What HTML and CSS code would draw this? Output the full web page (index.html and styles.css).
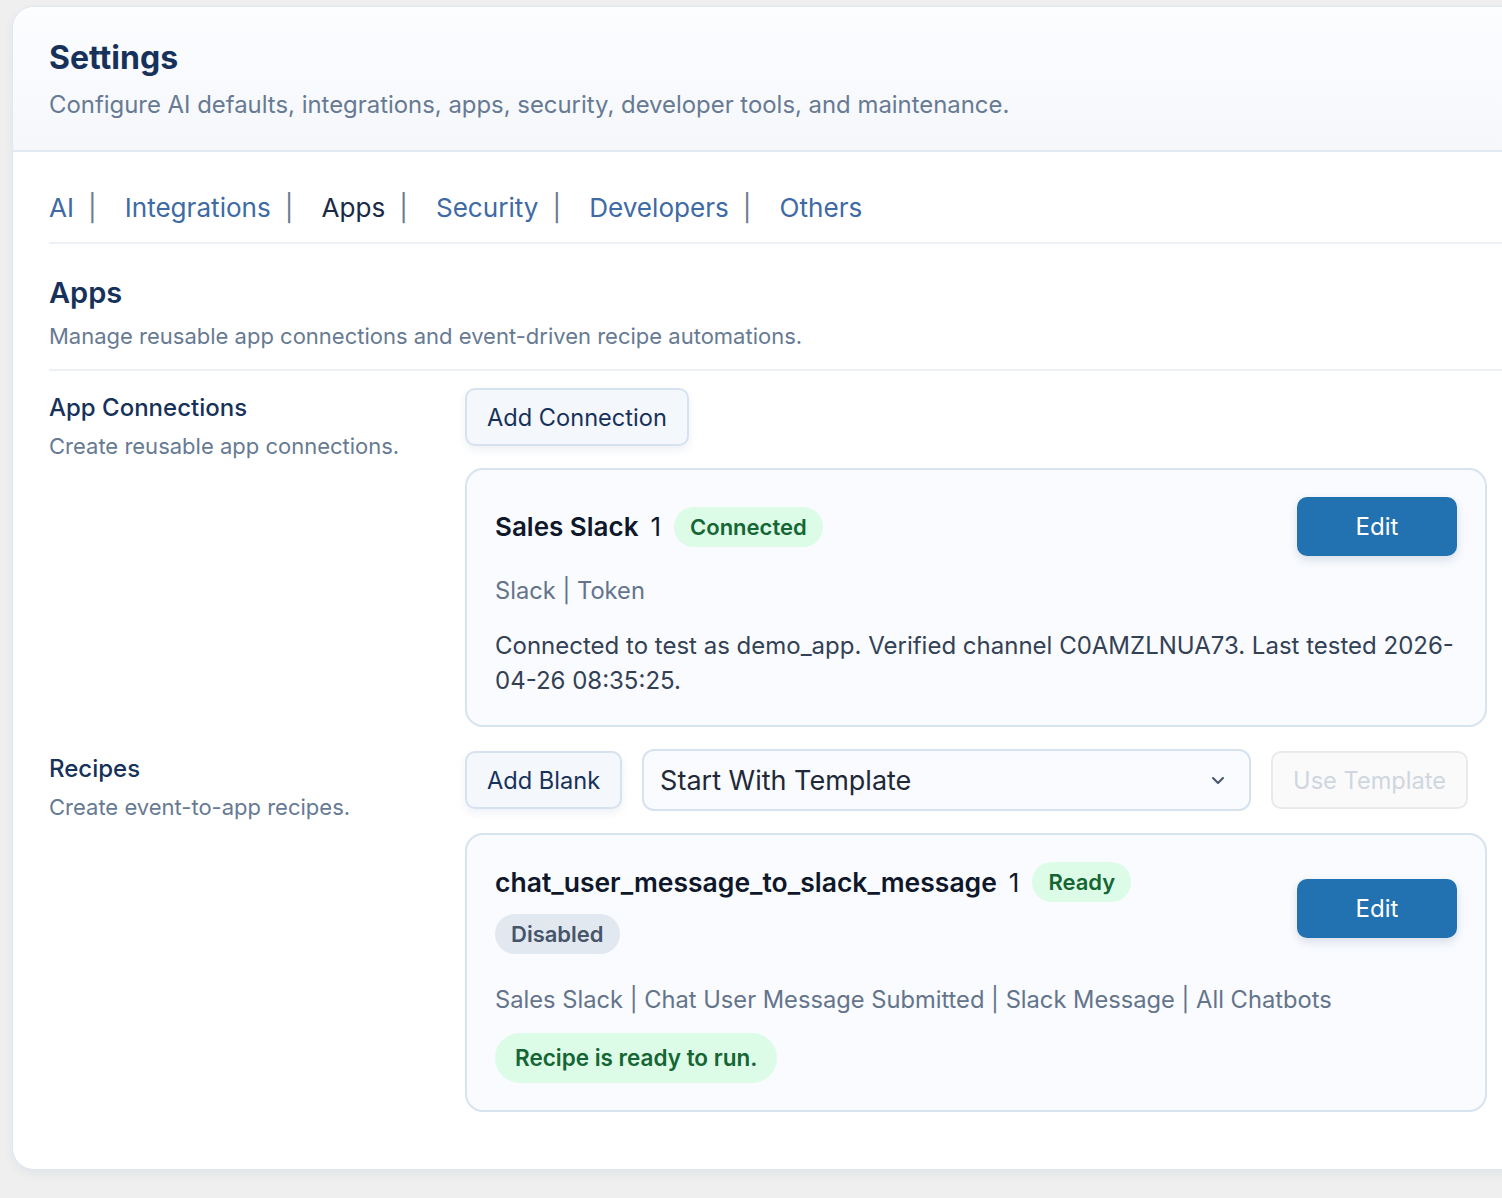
FILE: index.html
```html
<!DOCTYPE html>
<html>
<head>
<meta charset="utf-8">
<link rel="stylesheet" href="styles.css">
</head>
<body>
<div class="page">
  <div class="card">
    <header class="card-head">
      <h1 class="title">Settings</h1>
      <p class="subtitle">Configure AI defaults, integrations, apps, security, developer tools, and maintenance.</p>
    </header>
    <div class="card-body">
      <nav class="tabs">
        <a class="tab">AI</a><span class="sep">|</span>
        <a class="tab">Integrations</a><span class="sep">|</span>
        <a class="tab active">Apps</a><span class="sep">|</span>
        <a class="tab">Security</a><span class="sep">|</span>
        <a class="tab">Developers</a><span class="sep">|</span>
        <a class="tab">Others</a>
      </nav>
      <section class="section-head">
        <h2 class="section-title">Apps</h2>
        <p class="section-desc">Manage reusable app connections and event-driven recipe automations.</p>
      </section>
      <div class="rows">
        <div class="row">
          <div class="row-label">
            <h3 class="label-title">App Connections</h3>
            <p class="label-desc">Create reusable app connections.</p>
          </div>
          <div class="row-main">
            <div class="toolbar">
              <button class="btn">Add Connection</button>
            </div>
            <div class="item">
              <div class="item-head">
                <div class="item-titles">
                  <span class="item-name">Sales Slack</span>
                  <span class="item-count">1</span>
                  <span class="badge green">Connected</span>
                </div>
                <button class="btn-primary">Edit</button>
              </div>
              <p class="item-meta">Slack | Token</p>
              <p class="item-desc">Connected to test as demo_app. Verified channel C0AMZLNUA73. Last tested 2026-04-26 08:35:25.</p>
            </div>
          </div>
        </div>
        <div class="row">
          <div class="row-label">
            <h3 class="label-title">Recipes</h3>
            <p class="label-desc">Create event-to-app recipes.</p>
          </div>
          <div class="row-main">
            <div class="toolbar">
              <button class="btn">Add Blank</button>
              <div class="select">
                <span>Start With Template</span>
                <svg class="chev" width="14" height="9" viewBox="0 0 14 9"><path d="M2 2l5 5 5-5" fill="none" stroke="#475569" stroke-width="2" stroke-linecap="round" stroke-linejoin="round"/></svg>
              </div>
              <button class="btn disabled">Use Template</button>
            </div>
            <div class="item">
              <div class="item-head">
                <div class="item-titles">
                  <span class="item-name big">chat_user_message_to_slack_message</span>
                  <span class="item-count">1</span>
                  <span class="badge green">Ready</span>
                  <span class="break"></span>
                  <span class="badge gray second">Disabled</span>
                </div>
                <button class="btn-primary">Edit</button>
              </div>
              <p class="item-meta recipe">Sales Slack | Chat User Message Submitted | Slack Message | All Chatbots</p>
              <div class="notice">Recipe is ready to run.</div>
            </div>
          </div>
        </div>
      </div>
    </div>
  </div>
</div>
</body>
</html>
```

FILE: styles.css
```css
html, body {
  margin: 0;
  padding: 0;
  overflow: hidden;
}
body {
  background: #efefef;
  font-family: Inter, "Noto Sans", sans-serif;
  width: 1502px;
  height: 1198px;
}
.page {
  padding: 6px 0 0 12px;
}
.card {
  width: 1560px;
  background: #fff;
  border: 1px solid #dfe7f1;
  border-radius: 22px;
  box-shadow: 0 4px 10px rgba(30, 60, 110, 0.06);
  overflow: hidden;
  padding-bottom: 57px;
}
.card-head {
  background: linear-gradient(180deg, #fcfdff 0%, #f5f7fb 100%);
  border-bottom: 2px solid #e3e9f1;
  padding: 32px 36px 30px;
}
.title {
  margin: 0;
  font-size: 32px;
  line-height: 38px;
  font-weight: 700;
  color: #17325a;
}
.subtitle {
  margin: 13px 0 0;
  font-size: 23.9px;
  line-height: 30px;
  color: #677a93;
}
.card-body {
  padding: 0 0 0 36px;
}
.tabs {
  display: flex;
  align-items: center;
  padding: 40px 0 18px;
  border-bottom: 2px solid #edf1f6;
  font-size: 26.1px;
  line-height: 32px;
}
.tab {
  color: #3e6aa5;
  text-decoration: none;
}
.tab.active {
  color: #1b2a44;
}
.sep {
  color: #6b7a90;
  margin: 0 28px 0 14px;
}
.section-head {
  padding: 31px 0 18px;
  border-bottom: 2px solid #edf1f6;
}
.section-title {
  margin: 0;
  font-size: 29px;
  line-height: 36px;
  font-weight: 600;
  color: #17325a;
}
.section-desc {
  margin: 10px 0 0;
  font-size: 22px;
  line-height: 30px;
  color: #677a93;
}
.rows {
  display: flex;
  flex-direction: column;
  gap: 22px;
  padding-top: 17px;
}
.row {
  display: grid;
  grid-template-columns: 384px 1022px;
  column-gap: 32px;
}
.row-label {
  padding-top: 4px;
}
.label-title {
  margin: 0;
  font-size: 24px;
  line-height: 32px;
  font-weight: 500;
  color: #17325a;
}
.label-desc {
  margin: 7px 0 0;
  font-size: 22px;
  line-height: 30px;
  color: #677a93;
}
.row-main {
  display: flex;
  flex-direction: column;
  gap: 22px;
}
.toolbar {
  display: flex;
  align-items: center;
  gap: 20px;
}
.btn {
  font-family: inherit;
  font-size: 23.6px;
  color: #17325a;
  background: #f4f7fc;
  border: 2px solid #d6e2f0;
  border-radius: 10px;
  height: 58px;
  padding: 0 20px;
  box-shadow: 0 4px 8px rgba(30, 60, 110, 0.08);
}
.btn.disabled {
  color: #cfd6df;
  background: #fafafa;
  border-color: #e8eaed;
  box-shadow: none;
}
.select {
  width: 609px;
  height: 62px;
  box-sizing: border-box;
  display: flex;
  align-items: center;
  justify-content: space-between;
  padding: 0 24px 0 16px;
  border: 2px solid #d6e2f0;
  border-radius: 12px;
  background: #f9fbfe;
  font-size: 27px;
  color: #1f2937;
}
.item {
  background: #f9fbfe;
  border: 2px solid #d8e3f0;
  border-radius: 18px;
  padding: 27px 28px;
}
.item-head {
  display: flex;
  align-items: center;
  justify-content: space-between;
}
.item-titles {
  display: flex;
  align-items: center;
  flex-wrap: wrap;
}
.item-name {
  font-size: 26px;
  font-weight: 600;
  color: #0f172a;
}
.item-name.big {
  font-size: 26.5px;
}
.item-count {
  font-size: 26px;
  color: #0f172a;
  margin-left: 12px;
  margin-right: 13px;
}
.break {
  flex-basis: 100%;
  height: 0;
}
.badge {
  display: inline-flex;
  align-items: center;
  height: 40px;
  padding: 0 16px;
  border-radius: 20px;
  font-size: 22px;
  font-weight: 600;
}
.badge.second {
  margin-top: 12px;
}
.badge.green {
  background: #dcfce7;
  color: #166534;
}
.badge.gray {
  background: #e2e8f0;
  color: #475569;
}
.btn-primary {
  font-family: inherit;
  width: 160px;
  height: 59px;
  border: none;
  border-radius: 10px;
  background: #2271b1;
  color: #fff;
  font-size: 24px;
  box-shadow: 0 4px 10px rgba(30, 60, 110, 0.15);
}
.item-meta {
  margin: 18px 0 0;
  font-size: 23.7px;
  line-height: 34px;
  color: #64748b;
}
.item-meta.recipe {
  margin-top: 29px;
}
.item-desc {
  margin: 20px 0 0;
  font-size: 24px;
  line-height: 35px;
  color: #334155;
}
.notice {
  display: inline-block;
  margin-top: 16px;
  height: 50px;
  line-height: 50px;
  padding: 0 20px;
  border-radius: 25px;
  background: #dcfce7;
  color: #166534;
  font-size: 22.5px;
  font-weight: 600;
}
```
